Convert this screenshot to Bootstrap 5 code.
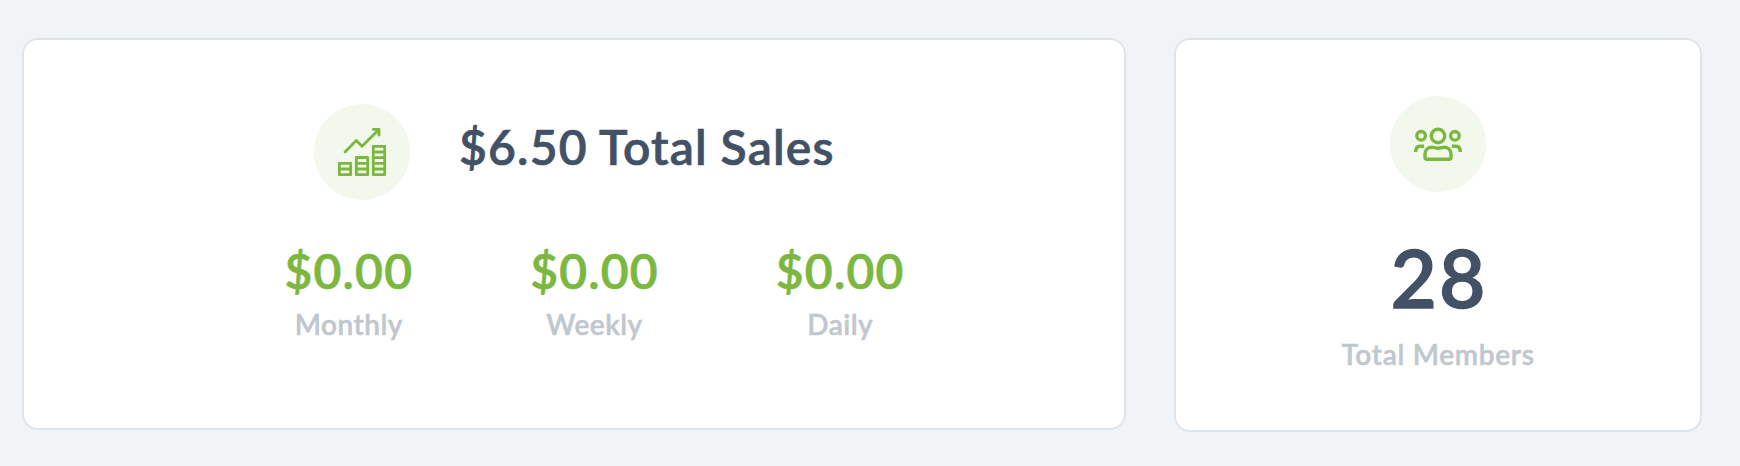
<!DOCTYPE html>
<html lang="en">
<head>
<meta charset="utf-8">
<meta name="viewport" content="width=device-width, initial-scale=1">
<title>Sales overview</title>
<link href="https://cdn.jsdelivr.net/npm/bootstrap@5.3.0/dist/css/bootstrap.min.css" rel="stylesheet">
<style>
body{background:#f0f4f7;font-family:"Avenir Next",Lato,sans-serif;font-weight:600;color:#425166}
.dash{padding:38px 38px 0 22px;gap:48px}
.panel{border:2px solid #dee4ea;border-radius:16px;background:#fff}
.sales{width:1104px;height:392px;padding-top:64px}
.members{width:528px;height:394px;padding-top:56px}
.disc{width:96px;height:96px;flex:none;display:block}
.headline{padding-left:290px;gap:49px}
.total,.amount,.count{-webkit-text-stroke:.7px currentColor}
.total{font-size:48px;line-height:60px;margin-top:13px;letter-spacing:1.2px;word-spacing:-.5px;white-space:nowrap}
.stats{width:737px;margin-left:202px;margin-top:41px}
.amount{font-size:48px;line-height:60px;color:#7cb740;letter-spacing:1.2px}
.caption{font-size:28px;line-height:36px;color:#c1c7cf;margin-top:5px;letter-spacing:.5px;-webkit-text-stroke:.5px currentColor}
.count{font-size:80px;line-height:96px;margin-top:37px;padding-left:2px;letter-spacing:2px;-webkit-text-stroke-width:1.3px}
.members .caption{margin-top:11px;letter-spacing:.7px}
</style>
</head>
<body>
<main class="dash d-flex align-items-start">
  <section class="panel sales">
    <div class="headline d-flex align-items-start">
      <svg class="disc" viewBox="0 0 96 96" fill="none" stroke="#7cb740" stroke-width="2.8" stroke-linecap="round" stroke-linejoin="round" aria-hidden="true">
        <circle cx="48" cy="48" r="48" fill="#f2f8ec" stroke="none"/>
        <path d="M31 48 42.3 36.4 48 42.2 65 25.4M59.3 25.3H65V31"/>
        <path d="M25.3 59.3H36.7V70.7H25.3ZM25.3 65H36.7M42.3 53.5H53.7V70.7H42.3ZM42.3 59.3H53.7M42.3 65H53.7M59.3 42.3H70.7V70.7H59.3ZM59.3 48H70.7M59.3 53.7H70.7M59.3 59.3H70.7M59.3 65H70.7"/>
      </svg>
      <div class="total">$6.50 Total Sales</div>
    </div>
    <div class="stats row g-0 text-center">
      <div class="col"><div class="amount">$0.00</div><div class="caption">Monthly</div></div>
      <div class="col"><div class="amount">$0.00</div><div class="caption">Weekly</div></div>
      <div class="col"><div class="amount">$0.00</div><div class="caption">Daily</div></div>
    </div>
  </section>
  <section class="panel members text-center">
    <svg class="disc mx-auto" viewBox="0 0 96 96" fill="none" stroke="#7cb740" stroke-width="3.4" stroke-linejoin="round" aria-hidden="true">
      <circle cx="48" cy="48" r="48" fill="#f2f8ec" stroke="none"/>
      <circle cx="48" cy="40" r="6.7"/><circle cx="31.1" cy="39.8" r="4.3"/><circle cx="64.9" cy="39.8" r="4.3"/>
      <path d="M37 63.3H59Q61 63.3 61 61.2V58.5C61 54 58.3 51.2 54.5 51.2C52 51.2 51 52.2 48 52.2S44 51.2 41.5 51.2C37.7 51.2 35 54 35 58.5V61.2Q35 63.3 37 63.3Z"/>
      <path d="M25.7 56C25.7 52.3 27.5 50.3 30 50.3H34.2M70.3 56C70.3 52.3 68.5 50.3 66 50.3H61.8"/>
    </svg>
    <div class="count">28</div>
    <div class="caption">Total Members</div>
  </section>
</main>
<script src="https://cdn.jsdelivr.net/npm/bootstrap@5.3.0/dist/js/bootstrap.bundle.min.js"></script>
</body>
</html>
